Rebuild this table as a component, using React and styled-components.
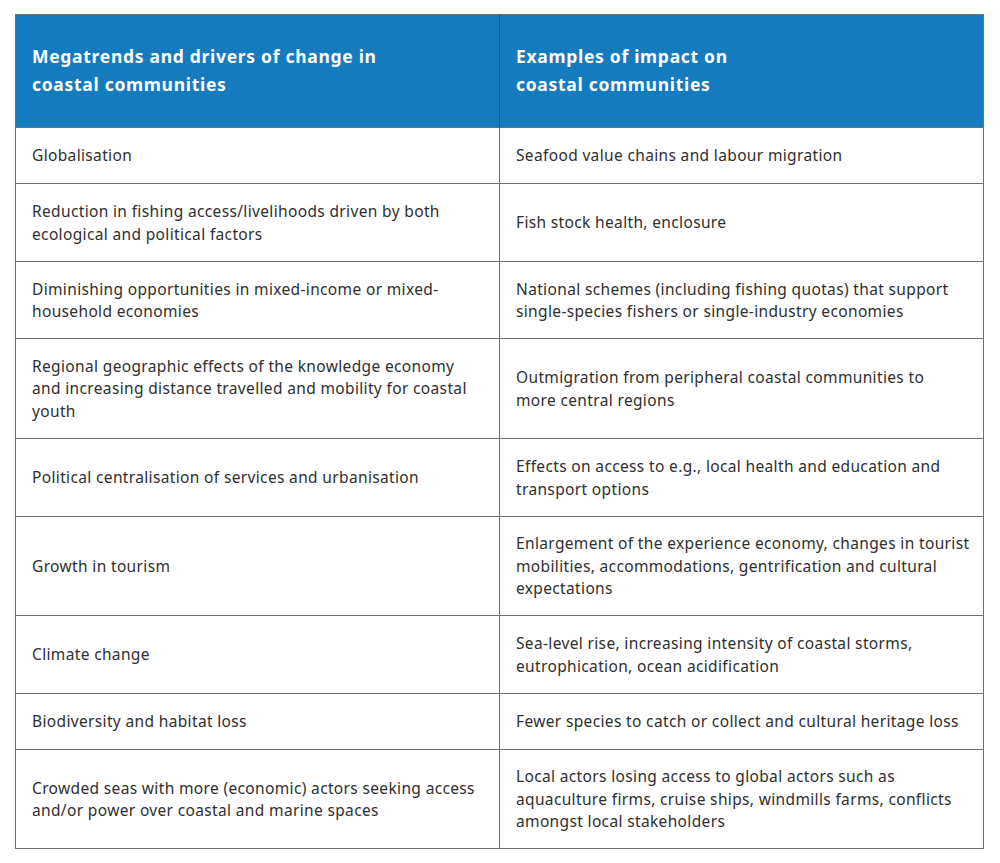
import styled, { createGlobalStyle } from "styled-components";

const GlobalStyle = createGlobalStyle`
  html, body {
    margin: 0;
    padding: 0;
    background: #ffffff;
  }
  body {
    font-family: "Noto Sans", "Liberation Sans", sans-serif;
  }
`;

const Page = styled.div`
  width: 1000px;
  height: 863px;
  padding: 14px 0 0 15px;
  box-sizing: border-box;
`;

const Table = styled.table`
  width: 968px;
  border-collapse: collapse;
  table-layout: fixed;
  border: 1px solid #707070;
`;

const HeadCell = styled.th`
  background-color: #157bbf;
  color: #ffffff;
  text-align: left;
  font-weight: 700;
  font-size: 17.5px;
  line-height: 28px;
  letter-spacing: 0.7px;
  padding: 0 16px 2px;
  height: 110px;
  vertical-align: middle;
  border-right: 1px solid #3c4d5c;
  &:last-child {
    border-right: 0;
  }
`;

const Cell = styled.td`
  color: #2f2f2f;
  font-size: 15.5px;
  line-height: 22.5px;
  letter-spacing: 0.35px;
  padding: 0 16px;
  height: ${(p) => p.$h}px;
  box-sizing: border-box;
  vertical-align: middle;
  border: 1px solid #707070;
`;

const Line = styled.span`
  display: block;
  white-space: nowrap;
`;

const rows = [
  { h: 56, left: ["Globalisation"], right: ["Seafood value chains and labour migration"] },
  {
    h: 78,
    left: ["Reduction in fishing access/livelihoods driven by both", "ecological and political factors"],
    right: ["Fish stock health, enclosure"],
  },
  {
    h: 77,
    left: ["Diminishing opportunities in mixed-income or mixed-", "household economies"],
    right: [
      "National schemes (including fishing quotas) that support",
      "single-species fishers or single-industry economies",
    ],
  },
  {
    h: 100,
    left: [
      "Regional geographic effects of the knowledge economy",
      "and increasing distance travelled and mobility for coastal",
      "youth",
    ],
    right: ["Outmigration from peripheral coastal communities to", "more central regions"],
  },
  {
    h: 78,
    left: ["Political centralisation of services and urbanisation"],
    right: ["Effects on access to e.g., local health and education and", "transport options"],
  },
  {
    h: 99,
    left: ["Growth in tourism"],
    right: [
      "Enlargement of the experience economy, changes in tourist",
      "mobilities, accommodations, gentrification and cultural",
      "expectations",
    ],
  },
  {
    h: 78,
    left: ["Climate change"],
    right: ["Sea-level rise, increasing intensity of coastal storms,", "eutrophication, ocean acidification"],
  },
  {
    h: 56,
    left: ["Biodiversity and habitat loss"],
    right: ["Fewer species to catch or collect and cultural heritage loss"],
  },
  {
    h: 99,
    left: ["Crowded seas with more (economic) actors seeking access", "and/or power over coastal and marine spaces"],
    right: [
      "Local actors losing access to global actors such as",
      "aquaculture firms, cruise ships, windmills farms, conflicts",
      "amongst local stakeholders",
    ],
  },
];

function Lines({ items }) {
  return items.map((t, i) => <Line key={i}>{t}</Line>);
}

export default function App() {
  return (
    <Page>
      <GlobalStyle />
      <Table>
        <colgroup>
          <col style={{ width: 484 }} />
          <col style={{ width: 484 }} />
        </colgroup>
        <thead>
          <tr>
            <HeadCell>
              <Line>Megatrends and drivers of change in</Line>
              <Line>coastal communities</Line>
            </HeadCell>
            <HeadCell>
              <Line>Examples of impact on</Line>
              <Line>coastal communities</Line>
            </HeadCell>
          </tr>
        </thead>
        <tbody>
          {rows.map((r, i) => (
            <tr key={i}>
              <Cell $h={r.h}>
                <Lines items={r.left} />
              </Cell>
              <Cell $h={r.h}>
                <Lines items={r.right} />
              </Cell>
            </tr>
          ))}
        </tbody>
      </Table>
    </Page>
  );
}
